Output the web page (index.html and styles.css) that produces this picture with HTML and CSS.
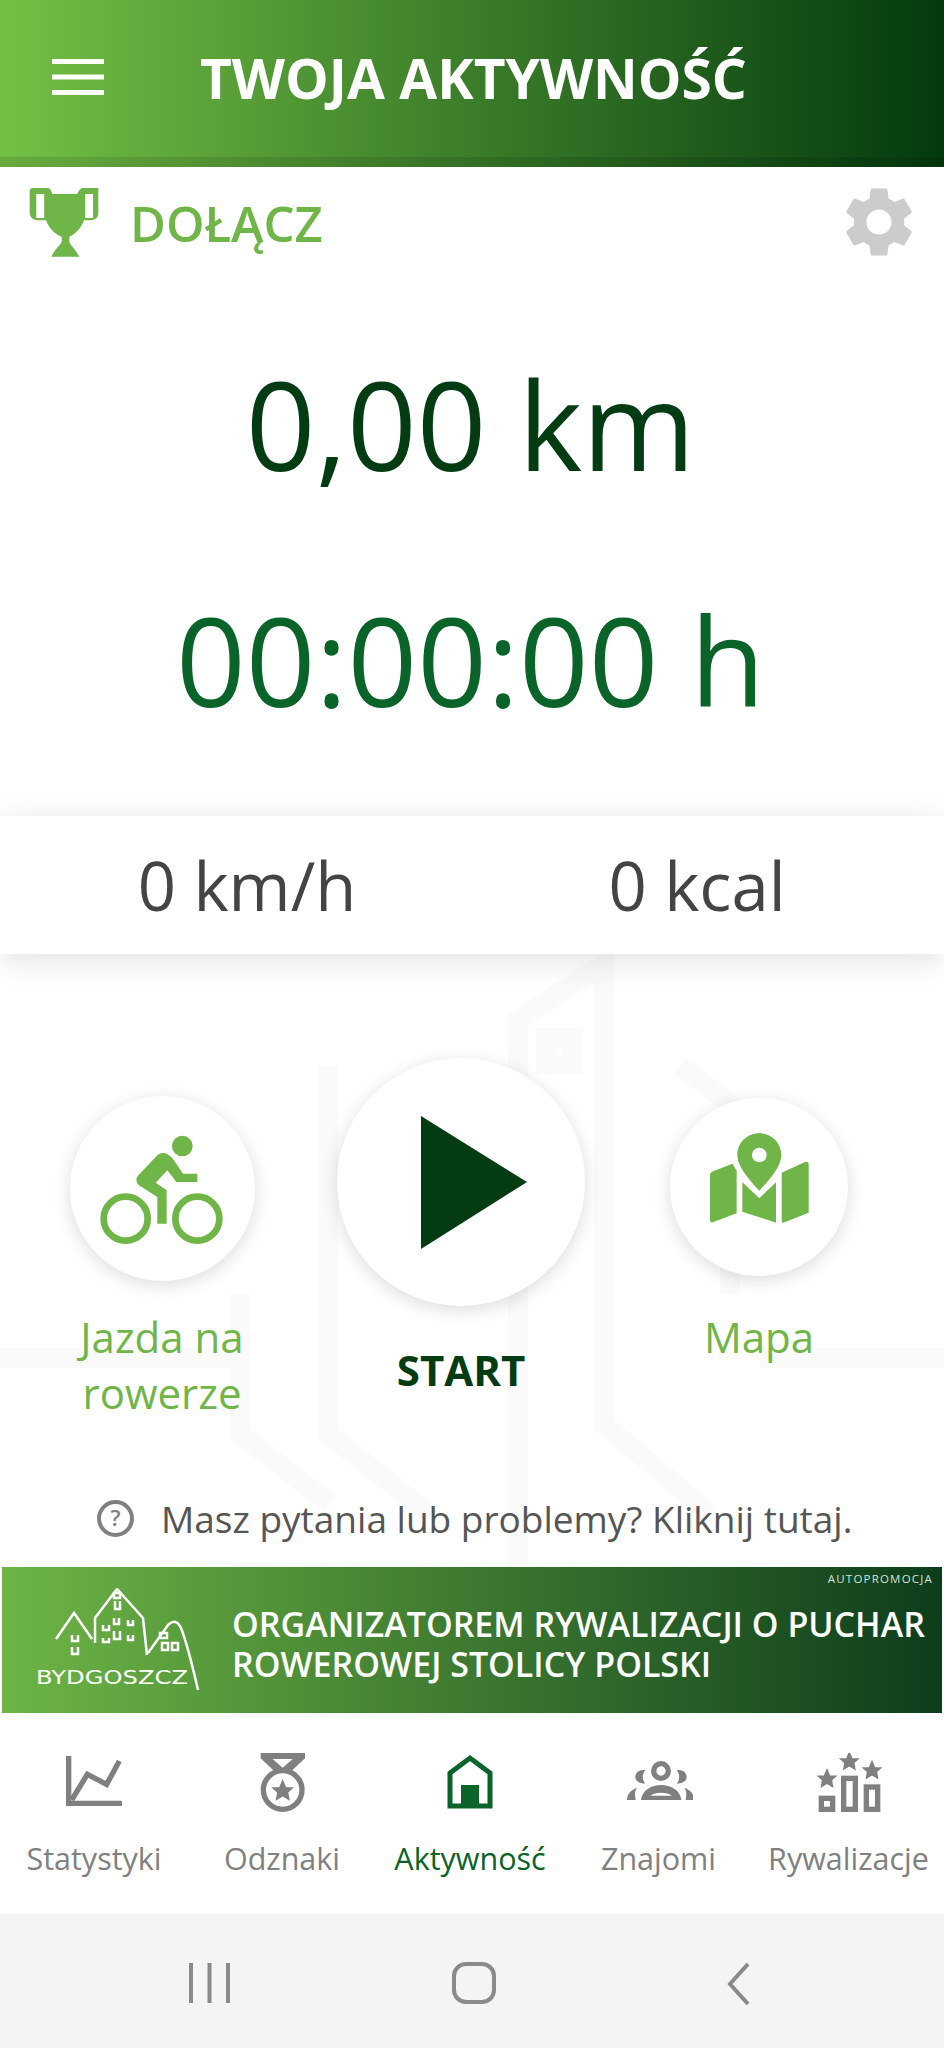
FILE: index.html
```html
<!DOCTYPE html>
<html lang="pl">
<head>
  <meta charset="UTF-8">
  <title>Twoja aktywność</title>
  <meta name="viewport" content="width=device-width, initial-scale=1.0">
  <link rel="stylesheet" href="styles.css">
</head>
<body>
  <div class="app">
    <header class="topbar">
      <svg class="burger" viewBox="0 0 52 36"><rect width="52" height="5"/><rect y="15.5" width="52" height="5"/><rect y="31" width="52" height="5"/></svg>
      <h1>TWOJA AKTYWNOŚĆ</h1>
    </header>

    <main class="content">
      <!-- watermark behind the lower half -->
      <svg class="watermark" viewBox="0 0 944 613">
        <path d="M518 680 V66 L604 10 V470 L710 560"/>
        <path d="M328 112 V480 L430 560"/>
        <path d="M680 112 L730 150 V340"/>
        <path d="M240 340 V480 L330 550"/>
        <path d="M0 404 H240 M760 404 H944"/>
        <rect x="546" y="84" width="26" height="26"/>
      </svg>

      <div class="join-row">
        <svg class="trophy" viewBox="27 21 210 212">
          <path fill-rule="evenodd" d="M38 24 H82 Q92 24 96 42 H172 Q180 24 190 24 H236 V100 Q236 120 214 122 H192 C185 145 165 165 148 172 V185 C148 195 165 205 178 232 H94 C105 205 125 195 125 185 V172 C105 165 85 145 78 122 H50 Q30 120 28 100 V34 Q28 24 38 24 Z M48 42 H72 V115 H48 Z M196 42 H220 V115 H196 Z"/>
        </svg>
        <span class="join-text">DOŁĄCZ</span>
        <svg class="gear" viewBox="2.5 2 19 20"><path d="M19.14 12.94c.04-.3.06-.61.06-.94 0-.32-.02-.64-.07-.94l2.03-1.58c.18-.14.23-.41.12-.61l-1.92-3.32c-.12-.22-.37-.29-.59-.22l-2.39.96c-.5-.38-1.03-.7-1.62-.94l-.36-2.54c-.04-.24-.24-.41-.48-.41h-3.84c-.24 0-.43.17-.47.41l-.36 2.54c-.59.24-1.13.57-1.62.94l-2.39-.96c-.22-.08-.47 0-.59.22L2.74 8.87c-.12.21-.08.47.12.61l2.03 1.58c-.05.3-.09.63-.09.94s.02.64.07.94l-2.03 1.58c-.18.14-.23.41-.12.61l1.92 3.32c.12.22.37.29.59.22l2.39-.96c.5.38 1.03.7 1.62.94l.36 2.54c.05.24.24.41.48.41h3.84c.24 0 .44-.17.47-.41l.36-2.54c.59-.24 1.13-.56 1.62-.94l2.39.96c.22.08.47 0 .59-.22l1.92-3.32c.12-.22.07-.47-.12-.61l-2.01-1.58zM12 15.6c-1.98 0-3.6-1.62-3.6-3.6s1.62-3.6 3.6-3.6 3.6 1.62 3.6 3.6-1.62 3.6-3.6 3.6z"/></svg>
      </div>

      <div class="big-value distance">0,00 km</div>
      <div class="big-value duration">00:00:00 h</div>

      <div class="stats">
        <span>0 km/h</span>
        <span>0 kcal</span>
      </div>

      <div class="actions">
        <div class="action action-bike">
          <div class="circle circle-side">
            <svg class="icon-bike" viewBox="30 30 378 342">
              <circle class="wheel" cx="110" cy="290" r="66"/>
              <circle class="wheel" cx="325" cy="290" r="66"/>
              <circle cx="280" cy="72" r="31"/>
              <path d="M205 100 Q222 85 240 100 L250 108 L282 155 H325 V180 H262 L235 145 L200 182 L233 205 V305 H205 V225 L150 190 Q135 175 148 160 Z"/>
            </svg>
          </div>
          <span class="action-label">Jazda na rowerze</span>
        </div>
        <div class="action action-start">
          <div class="circle circle-start">
            <svg class="icon-play" viewBox="0 0 106 133"><path d="M0 0 L106 66 L0 133 Z"/></svg>
          </div>
          <span class="action-label start-label">START</span>
        </div>
        <div class="action action-map">
          <div class="circle circle-map">
            <svg class="icon-map" viewBox="27 30 300 282">
              <path d="M36 155 L97 131 L110 152 V280 L38 307 Q30 309 30 300 V165 Q30 158 36 155 Z"/>
              <path d="M127 187 L178 235 L228 187 V308 L127 275 Z"/>
              <path d="M245 158 L315 126 Q326 122 326 133 V278 L250 308 Q245 310 245 300 Z"/>
              <path fill-rule="evenodd" d="M178 40 C141 40 112 69 112 105 C112 140 150 182 178 212 C206 182 244 140 244 105 C244 69 215 40 178 40 Z M178 83 A22 22 0 1 1 177.900 83 Z"/>
            </svg>
          </div>
          <span class="action-label map-label">Mapa</span>
        </div>
      </div>

      <div class="help">
        <svg class="help-icon" viewBox="0 0 37 37">
          <circle cx="18.5" cy="18.5" r="16.5"/>
          <text x="18.5" y="26" text-anchor="middle">?</text>
        </svg>
        <span>Masz pytania lub problemy? Kliknij tutaj.</span>
      </div>

      <div class="banner">
        <span class="banner-tag">AUTOPROMOCJA</span>
        <svg class="logo" viewBox="0 0 165 104">
          <path d="M21 51 L39 25 L57 51"/>
          <path d="M60 55 V30 L82 1 L108 30 L112 67"/>
          <path d="M113 65 L133 37 C138 32 143 33 146 40 C153 58 158 80 163 102"/>
          <path d="M37 47 v6 h6 v-6 M37 59 v7 h6 v-7 M68 37 v5 h6 v-5 M68 50 v4 h6 v-4 M79 30 v6 h5 v-6 M80 13 v8 h5 v-8 M79 5 h6 v5 h-6 z M79 43 v8 h6 v-8 M93 32 v5 h5 v-5 M93 47 v5 h5 v-5 M125 45 h7 v5 h-7 z M127 55 h6 v7 h-6 z M137 55 h6 v7 h-6 z"/>
          <text x="1" y="96" textLength="152" lengthAdjust="spacingAndGlyphs">BYDGOSZCZ</text>
        </svg>
        <p class="banner-text">ORGANIZATOREM RYWALIZACJI O PUCHAR<br>ROWEROWEJ STOLICY POLSKI</p>
      </div>
    </main>

    <nav class="tabs">
      <a class="tab" href="#statystyki">
        <svg class="tab-icon" viewBox="30 24 204 180">
          <path class="line" d="M56 33 V175 H216"/>
          <path class="line" d="M65 165 L112 88 L170 118 L208 48"/>
        </svg>
        Statystyki
      </a>
      <a class="tab" href="#odznaki">
        <svg class="tab-icon" viewBox="594 24 204 180">
          <path class="solid" fill-rule="evenodd" d="M632 24 H765 V40 L722 80 H675 L632 40 Z M668 42 H728 L698 68 Z"/>
          <circle class="line" cx="698" cy="135" r="58"/>
          <polygon class="solid" transform="translate(698 138) scale(3.6)" points="0,-10 2.9,-3.1 9.5,-3.1 4.7,1.2 5.9,8.1 0,4.5 -5.9,8.1 -4.7,1.2 -9.5,-3.1 -2.9,-3.1"/>
        </svg>
        Odznaki
      </a>
      <a class="tab active" href="#aktywnosc">
        <svg class="tab-icon" viewBox="0 0 68 60">
          <path class="home" d="M14 53 V20 L34 5 L54 20 V53 Z"/>
          <rect class="solid" x="25" y="32" width="18" height="21"/>
        </svg>
        Aktywność
      </a>
      <a class="tab" href="#znajomi">
        <svg class="tab-icon" viewBox="74 24 204 180">
          <circle class="line" cx="182" cy="78" r="22"/>
          <path class="solid" d="M135 76 C115 72 105 85 105 97 C105 108 118 116 135 116 C125 105 125 88 135 76 Z"/>
          <path class="solid" d="M229 76 C249 72 259 85 259 97 C259 108 246 116 229 116 C239 105 239 88 229 76 Z"/>
          <path class="solid" fill-rule="evenodd" d="M122 165 C125 135 155 120 182 120 C210 120 240 135 243 165 Z M150 152 C165 140 200 140 215 152 Z"/>
          <path class="solid" d="M80 165 C80 150 90 135 110 128 C102 140 104 150 106 165 Z"/>
          <path class="solid" d="M282 165 C282 150 272 135 252 128 C260 140 258 150 256 165 Z"/>
        </svg>
        Znajomi
      </a>
      <a class="tab" href="#rywalizacje">
        <svg class="tab-icon" viewBox="644 24 204 180">
          <polygon class="solid" transform="translate(747 50) scale(3.3)" points="0,-10 2.9,-3.1 9.5,-3.1 4.7,1.2 5.9,8.1 0,4.5 -5.9,8.1 -4.7,1.2 -9.5,-3.1 -2.9,-3.1"/>
          <polygon class="solid" transform="translate(680 102) scale(3.3)" points="0,-10 2.9,-3.1 9.5,-3.1 4.7,1.2 5.9,8.1 0,4.5 -5.9,8.1 -4.7,1.2 -9.5,-3.1 -2.9,-3.1"/>
          <polygon class="solid" transform="translate(815 77) scale(3.3)" points="0,-10 2.9,-3.1 9.5,-3.1 4.7,1.2 5.9,8.1 0,4.5 -5.9,8.1 -4.7,1.2 -9.5,-3.1 -2.9,-3.1"/>
          <rect class="line" x="663" y="160" width="34" height="33"/>
          <rect class="line" x="730" y="100" width="35" height="93"/>
          <rect class="line" x="798" y="126" width="34" height="67"/>
        </svg>
        Rywalizacje
      </a>
    </nav>

    <div class="system-bar">
      <svg class="sys-recent" viewBox="0 0 41 42"><path d="M2 1 V41 M20.500 1 V41 M39 1 V41"/></svg>
      <svg class="sys-home" viewBox="0 0 44 42"><rect x="2" y="2" width="40" height="38" rx="12"/></svg>
      <svg class="sys-back" viewBox="0 0 23 44"><path d="M21 2 L3 22 L21 42"/></svg>
    </div>
  </div>
</body>
</html>
```

FILE: styles.css
```css
:root {
  --light-green: #6fb547;
  --dark-green: #033b12;
  --mid-green: #0a6328;
  --grey: #808080;
  --text: #444;
}

* {
  box-sizing: border-box;
}

body {
  margin: 0;
  background: #fff;
  font-family: "Open Sans", sans-serif;
  color: var(--text);
}

.app {
  width: 944px;
  height: 2048px;
  display: flex;
  flex-direction: column;
  overflow: hidden;
}

/* header */
.topbar {
  height: 167px;
  padding: 0 0 14px 52px;
  display: flex;
  align-items: center;
  background: linear-gradient(90deg, #74c045, #023a0e);
  box-shadow: inset 0 -10px 0 rgba(0, 0, 0, 0.1);
}

.burger {
  width: 52px;
  height: 36px;
  fill: #fff;
}

.topbar h1 {
  margin: 2px 0 0 96px;
  font-size: 55px;
  font-weight: 700;
  color: #fff;
  white-space: nowrap;
}

.content {
  position: relative;
  flex: 1;
  display: flex;
  flex-direction: column;
}

.watermark {
  position: absolute;
  left: 0;
  top: 787px;
  width: 944px;
  height: 613px;
  fill: none;
  stroke: #f9faf9;
  stroke-width: 20;
}

.join-row {
  position: relative;
  height: 139px;
  padding: 20px 31px 0 29px;
  display: flex;
  align-items: flex-start;
}

.trophy {
  width: 70px;
  height: 70px;
  fill: var(--light-green);
}

.join-text {
  margin: 4px 0 0 31px;
  font-size: 49px;
  line-height: 64px;
  font-weight: 600;
  color: var(--light-green);
}

.gear {
  width: 68px;
  height: 70px;
  margin-left: auto;
  fill: #ccc;
}

.big-value {
  position: relative;
  height: 236px;
  line-height: 236px;
  font-size: 122px;
  text-align: center;
  margin-right: 3px;
}

.distance {
  color: var(--dark-green);
}

.duration {
  color: var(--mid-green);
}

.stats {
  position: relative;
  height: 138px;
  margin-top: 38px;
  display: grid;
  grid-template-columns: 494px 406px;
  align-items: center;
  text-align: center;
  font-size: 67px;
  line-height: 134px;
  background: #fff;
  box-shadow: 0 6px 30px rgba(0, 0, 0, 0.12);
}

.actions {
  position: relative;
  height: 540px;
  display: grid;
  grid-template-columns: 324px 274px 322px;
}

.action {
  display: flex;
  flex-direction: column;
  align-items: center;
}

.action-bike {
  padding-top: 142px;
}

.action-start {
  padding-top: 104px;
}

.action-map {
  padding-top: 144px;
}

.circle {
  flex: none;
  display: flex;
  align-items: center;
  justify-content: center;
  border-radius: 50%;
  background: #fff;
  box-shadow: 0 4px 18px rgba(0, 0, 0, 0.14);
}

.circle-side {
  width: 185px;
  height: 185px;
}

.circle-start {
  width: 248px;
  height: 248px;
}

.circle-map {
  width: 178px;
  height: 178px;
}

.icon-bike {
  width: 126px;
  height: 114px;
  fill: var(--light-green);
}

.wheel {
  fill: none;
  stroke: var(--light-green);
  stroke-width: 20;
}

.icon-play {
  width: 106px;
  height: 133px;
  margin: 0 0 0 26px;
  fill: var(--dark-green);
}

.icon-map {
  width: 100px;
  height: 94px;
  margin-top: -20px;
  fill: var(--light-green);
}

.action-label {
  width: 220px;
  margin-top: 28px;
  font-size: 42px;
  line-height: 56px;
  text-align: center;
  color: var(--light-green);
}

.map-label {
  margin-top: 33px;
}

.start-label {
  margin-top: 36px;
  font-weight: 700;
  color: var(--dark-green);
}

.help {
  position: relative;
  height: 48px;
  display: flex;
  align-items: center;
  padding-left: 97px;
  font-size: 37px;
  color: #555;
}

.help-icon {
  width: 37px;
  height: 37px;
  margin-right: 27px;
}

.help-icon circle {
  fill: none;
  stroke: var(--grey);
  stroke-width: 4;
}

.help-icon text {
  font-size: 22px;
  font-weight: 600;
  fill: var(--grey);
}

.banner {
  position: relative;
  height: 146px;
  margin: 25px 2px 0;
  padding-left: 33px;
  display: flex;
  align-items: center;
  background: linear-gradient(90deg, #6db545, #0d3d1c);
}

.banner-tag {
  position: absolute;
  right: 9px;
  top: 4px;
  font-size: 11.500px;
  letter-spacing: 1.2px;
  color: #d5e2d5;
}

.logo {
  width: 165px;
  height: 104px;
  fill: none;
  stroke: #fff;
  stroke-width: 2.5;
}

.logo text {
  font-family: "DejaVu Sans", sans-serif;
  font-size: 19px;
  fill: #fff;
  stroke: none;
}

.banner-text {
  margin: 8px 0 0 32px;
  font-size: 34px;
  line-height: 40px;
  font-weight: 600;
  color: #fff;
  white-space: nowrap;
}

/* bottom tabs */
.tabs {
  height: 201px;
  padding: 40px 0 0;
  display: grid;
  grid-template-columns: 188px 188px 188px 189px 191px;
  background: #fff;
}

.tab {
  display: flex;
  flex-direction: column;
  align-items: center;
  font-size: 30.500px;
  line-height: 42px;
  text-decoration: none;
  color: var(--grey);
}

.tab.active {
  color: var(--mid-green);
}

.tab-icon {
  width: 68px;
  height: 60px;
  margin-bottom: 24px;
}

.tab-icon .line {
  fill: none;
  stroke: currentColor;
  stroke-width: 16;
}

.tab-icon .home {
  fill: none;
  stroke: currentColor;
  stroke-width: 5;
}

.tab-icon .solid {
  fill: currentColor;
}

.system-bar {
  height: 134px;
  padding: 48px 0 0 189px;
  display: flex;
  align-items: flex-start;
  background: #f4f4f4;
}

.system-bar svg {
  fill: none;
  stroke: #8a8a8a;
  stroke-width: 4;
}

.sys-recent {
  width: 41px;
  height: 42px;
}

.sys-home {
  width: 44px;
  height: 42px;
  margin-left: 222px;
}

.sys-back {
  width: 23px;
  height: 44px;
  margin-left: 231px;
}
```
